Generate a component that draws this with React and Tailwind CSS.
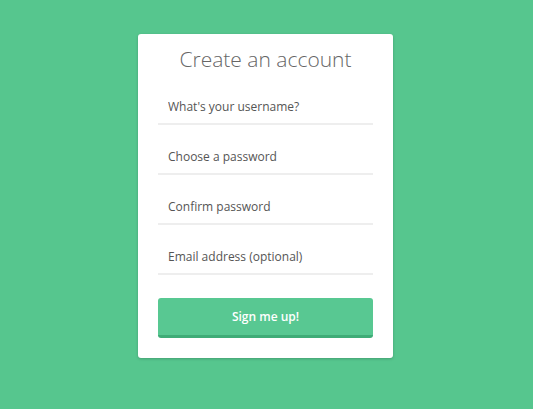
const fields = [
  { type: 'text', placeholder: "What's your username?" },
  { type: 'password', placeholder: 'Choose a password' },
  { type: 'password', placeholder: 'Confirm password' },
  { type: 'email', placeholder: 'Email address (optional)' },
]

const App = () => {
  return (
    <div
      className="min-h-screen bg-[#56c68e] pt-[34px] pr-[2px] flex justify-center"
      style={{ fontFamily: '"Open Sans", "Liberation Sans", sans-serif' }}
    >
      <form
        className="w-[255px] h-[324px] bg-white rounded-[3px] shadow-[0_1px_3px_rgba(0,0,0,0.2)] px-[20px] pt-[10px]"
        onSubmit={(e) => e.preventDefault()}
      >
        <h1 className="text-center text-[21px] leading-[30px] font-light text-[#666]">Create an account</h1>
        <div className="mt-px">
          {fields.map((f) => (
            <div key={f.placeholder} className="border-b-2 border-[#eeeeee] pt-[23px] pb-[7px] px-[10px]">
              <input
                type={f.type}
                placeholder={f.placeholder}
                className="w-full block text-[12px] leading-[18px] h-[18px] text-[#555] placeholder:text-[#555] outline-none bg-transparent"
              />
            </div>
          ))}
        </div>
        <button
          type="submit"
          className="mt-[23px] w-full h-[40px] rounded-[3px] bg-[#58c892] border-b-[3px] border-[#3fac77] text-white text-[12px] font-semibold"
        >
          Sign me up!
        </button>
      </form>
    </div>
  )
}

export default App
